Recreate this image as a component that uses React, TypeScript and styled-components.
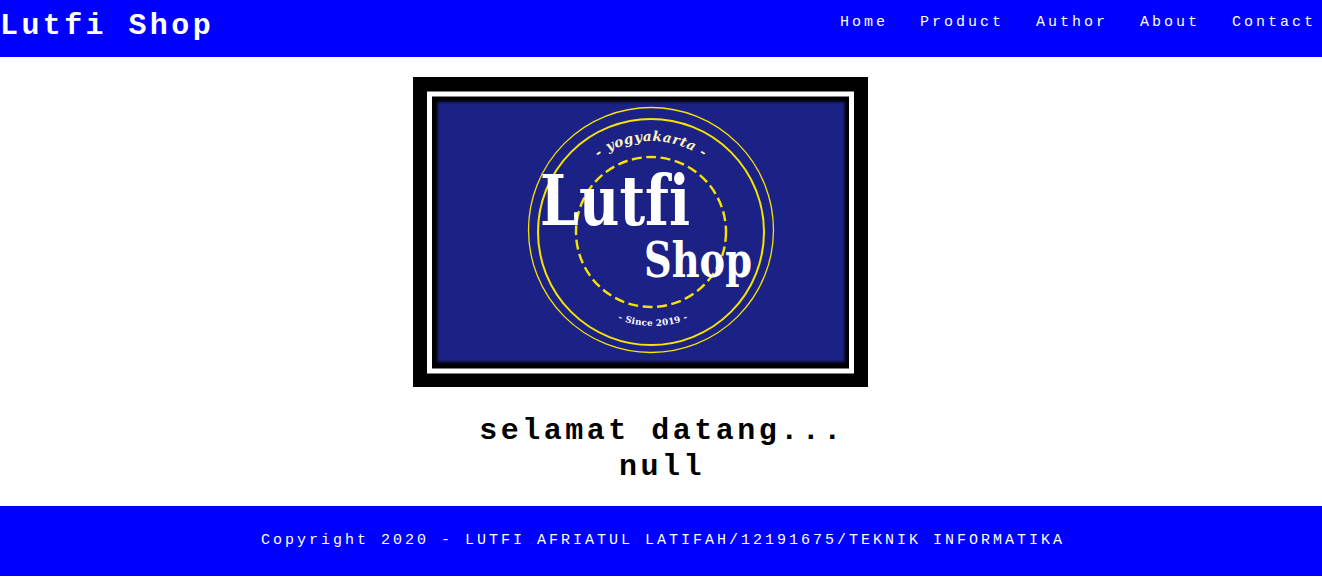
import React from 'react';
import styled, {createGlobalStyle} from 'styled-components';

const GlobalStyle = createGlobalStyle`
  html, body {
    margin: 0;
    padding: 0;
    background: #ffffff;
    font-family: "Liberation Mono", "Courier New", monospace;
  }
`;

const Header = styled.header`
  height: 57px;
  background-color: #0000ff;
  display: flex;
  justify-content: space-between;
  align-items: flex-start;
  color: #ffffff;
`;

const Brand = styled.h1`
  margin: 9px 0 0;
  font-size: 30px;
  line-height: 34px;
  font-weight: bold;
  letter-spacing: 3.4px;
`;

const Nav = styled.nav`
  display: flex;
  gap: 32px;
  padding: 14px 6px 0 0;
`;

const NavLink = styled.a`
  color: #ffffff;
  text-decoration: none;
  font-size: 15px;
  line-height: 17px;
  letter-spacing: 3px;
`;

const Main = styled.main`
  height: 449px;
  padding-top: 20px;
  box-sizing: border-box;
  display: flex;
  flex-direction: column;
  align-items: center;
`;

const Poster = styled.svg`
  display: block;
  width: 455px;
  height: 310px;
  margin-right: 41px;
`;

// big logo words, the fi must stay two letters
const LogoWord = styled.text`
  font-family: "DejaVu Serif", serif;
  font-weight: bold;
  font-variant-ligatures: none;
  fill: #ffffff;
`;

const ArcLabel = styled.text<{$italic?: boolean}>`
  font-family: "DejaVu Serif", serif;
  font-weight: bold;
  font-style: ${(props) => (props.$italic ? 'italic' : 'normal')};
`;

const Welcome = styled.h2`
  margin: 26px 0 0 2px;
  font-size: 30px;
  line-height: 36px;
  font-weight: bold;
  letter-spacing: 3.5px;
  text-align: center;
  color: #000000;
`;

const Footer = styled.footer`
  height: 70px;
  padding: 0 0 2px 4px;
  box-sizing: border-box;
  background-color: #0000ff;
  color: #ffffff;
  display: flex;
  align-items: center;
  justify-content: center;
  font-size: 15px;
  letter-spacing: 3px;
`;

const links = ['Home', 'Product', 'Author', 'About', 'Contact'];

// the shop logo, frame and badge together
function LogoPoster() {
    return (
        <Poster viewBox="0 0 455 310">
            <defs>
                <filter id="soft" x="-5%" y="-5%" width="110%" height="110%">
                    <feGaussianBlur stdDeviation="1.4"/>
                </filter>
                <path id="topArc" d="M 147 155 A 91 91 0 0 1 329 155"/>
                <path id="bottomArc" d="M 146 155 A 94 94 0 0 0 334 155"/>
            </defs>
            <rect width="455" height="310" fill="#000000"/>
            <rect x="16.5" y="17" width="422" height="277" fill="#000000" stroke="#ffffff" strokeWidth="5"/>
            <rect x="24.5" y="25" width="407" height="260" fill="#1b2085" filter="url(#soft)"/>

            <circle cx="238" cy="153" r="122.5" fill="none" stroke="#f6e400" strokeWidth="1.3"/>
            <circle cx="238" cy="155" r="113" fill="none" stroke="#f6e400" strokeWidth="2"/>
            <circle cx="238" cy="155" r="75" fill="none" stroke="#f6e400" strokeWidth="2.4" strokeDasharray="10 4.5"/>

            <ArcLabel $italic fontSize="13.5" fill="#fbf3c0" letterSpacing="0.6">
                <textPath href="#topArc" startOffset="50%" textAnchor="middle">- yogyakarta -</textPath>
            </ArcLabel>
            <LogoWord fontSize="70" x="127" y="148" textLength="150" lengthAdjust="spacingAndGlyphs">Lutfi</LogoWord>
            <LogoWord fontSize="48" x="231" y="200" textLength="108" lengthAdjust="spacingAndGlyphs">Shop</LogoWord>
            <ArcLabel fontSize="8.8" fill="#ffffff" letterSpacing="0.3">
                <textPath href="#bottomArc" startOffset="50%" textAnchor="middle">- Since 2019 -</textPath>
            </ArcLabel>
        </Poster>
    );
}

function App() {
    return (
        <>
            <GlobalStyle/>
            <Header>
                <Brand>Lutfi Shop</Brand>
                <Nav>
                    {links.map((link) => (
                        <NavLink href="#" key={link}>{link}</NavLink>
                    ))}
                </Nav>
            </Header>
            <Main>
                <LogoPoster/>
                <Welcome>selamat datang...<br/>null</Welcome>
            </Main>
            <Footer>Copyright 2020 - LUTFI AFRIATUL LATIFAH/12191675/TEKNIK INFORMATIKA</Footer>
        </>
    );
}

export default App;
